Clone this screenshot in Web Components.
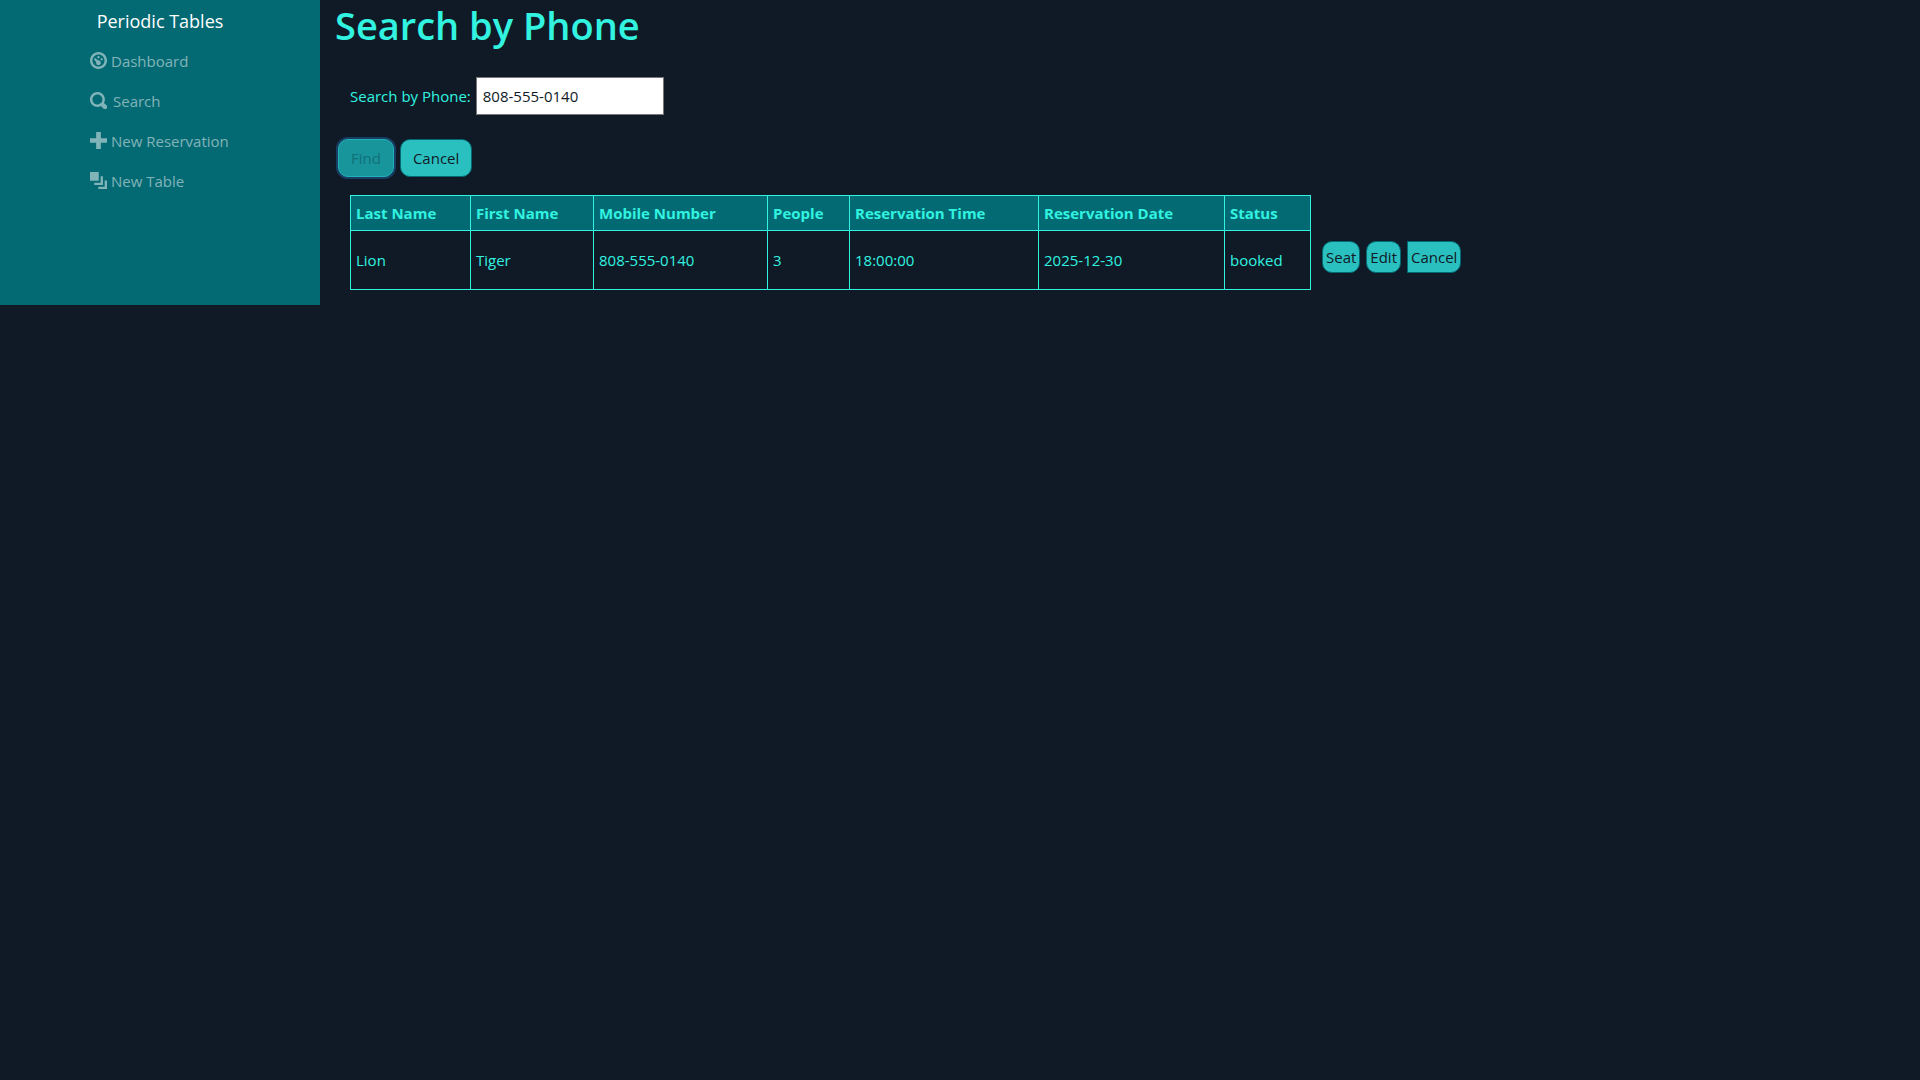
<!DOCTYPE html>
<html lang="en">
<head>
<meta charset="utf-8">
<title>Periodic Tables</title>
<style>
  :root {
    --teal: #036973;
    --bright: #31f3e0;
    --button: #2bc0c0;
    --ink: #101a26;
  }
  body {
    margin: 0;
    background: var(--ink);
    color: var(--bright);
    font: 15px/24px "Segoe UI", "Open Sans", "Noto Sans", sans-serif;
  }
</style>
</head>
<body>
<app-shell>
  <side-bar slot="side" brand="Periodic Tables">
    <nav-item icon="dashboard">Dashboard</nav-item>
    <nav-item icon="search" spaced>Search</nav-item>
    <nav-item icon="plus">New Reservation</nav-item>
    <nav-item icon="layers">New Table</nav-item>
  </side-bar>
  <phone-search></phone-search>
  <reservation-list></reservation-list>
</app-shell>
<script>
const define = (name, html, setup) => {
  const template = document.createElement('template');
  template.innerHTML = `<style>*{box-sizing:border-box}</style>${html}`;
  customElements.define(name, class extends HTMLElement {
    constructor() {
      super();
      this.attachShadow({ mode: 'open' }).append(template.content.cloneNode(true));
    }
    connectedCallback() { if (setup) setup(this, this.shadowRoot); }
  });
};

const icons = {
  dashboard: 'M4 0c-2.2 0-4 1.8-4 4s1.8 4 4 4 4-1.8 4-4-1.8-4-4-4zm0 1.15c1.57 0 2.85 1.28 2.85 2.85s-1.28 2.85-2.85 2.85-2.85-1.28-2.85-2.85 1.28-2.85 2.85-2.85zm0 .75c-.3 0-.55.25-.55.55s.25.55.55.55.55-.25.55-.55-.25-.55-.55-.55zm-1.66 1a.55.55 0 0 0-.25.92l.85.93c-.02.08-.06.16-.06.25 0 .6.5 1.1 1.1 1.1s1.1-.5 1.1-1.1-.5-1.1-1.1-1.1c-.09 0-.17.04-.25.06l-.91-.91a.5.5 0 0 0-.48-.15zm3.16 0c-.3 0-.55.25-.55.55s.25.55.55.55.55-.25.55-.55-.25-.55-.55-.55z',
  search: 'M3.5 0c-1.93 0-3.5 1.57-3.5 3.5s1.57 3.5 3.5 3.5c.59 0 1.17-.14 1.66-.41a1 1 0 0 0 .13.13l1 1a1.02 1.02 0 1 0 1.44-1.44l-1-1a1 1 0 0 0-.16-.13c.27-.49.44-1.06.44-1.66 0-1.93-1.55-3.5-3.5-3.5zm0 1.15c1.3 0 2.35 1.05 2.35 2.35 0 .6-.22 1.16-.6 1.57l-.16.16c-.41.4-.98.62-1.59.62-1.3 0-2.35-1.05-2.35-2.35s1.05-2.35 2.35-2.35z',
  plus: 'M2.9 0v2.9h-2.9v2.2h2.9v2.9h2.2v-2.9h2.9v-2.2h-2.9v-2.9z',
  layers: 'M0 0v4.1h4.1v-4.1zm5 2v3h-3v1.1h4.1v-4.1zm1.9 2v2.9h-3v1.1h4.1v-4z'
};

define('app-shell', `
  <style>
    :host { display: flex; align-items: stretch; }
    aside { flex: 0 0 320px; display: flex; background: var(--teal); }
    main { flex: 1; min-width: 0; padding: 0 15px 15px; }
  </style>
  <aside><slot name="side"></slot></aside>
  <main><slot></slot></main>`);

define('side-bar', `
  <style>
    :host { display: flex; flex: 1; flex-direction: column; align-items: center; }
    a { color: #fff; font-size: 18px; line-height: 24px; padding: 9px 0 8px; text-decoration: none; }
    nav { width: 140px; }
  </style>
  <a href="#"></a>
  <nav><slot></slot></nav>`,
  (host, root) => { root.querySelector('a').textContent = host.getAttribute('brand'); });

define('nav-item', `
  <style>
    :host { display: block; }
    a { display: flex; align-items: center; gap: 4px; height: 40px; color: rgba(255,255,255,.5); text-decoration: none; white-space: nowrap; }
    :host([spaced]) a { gap: 6px; }
    svg { flex: none; width: 17px; height: 17px; fill: currentColor; margin-bottom: 2px; }
  </style>
  <a href="#"><svg viewBox="0 0 8 8" aria-hidden="true"><path/></svg><slot></slot></a>`,
  (host, root) => { root.querySelector('path').setAttribute('d', icons[host.getAttribute('icon')]); });

define('teal-button', `
  <style>
    :host { display: inline-flex; --radius: 10px; }
    button {
      font: inherit; color: #101a26; background: var(--button);
      border: 1px solid var(--teal); border-radius: var(--radius); padding: 6px 12px;
    }
    :host([small]) button { padding: 3px; }
    :host([square]) button { border-radius: 0 var(--radius) var(--radius) 0; }
    :host([focused]) button { color: #127078; background: #18959b; border-color: #20b2b5; box-shadow: 0 0 0 2px #173f66; }
  </style>
  <button type="button"><slot></slot></button>`);

define('phone-search', `
  <style>
    :host { display: block; }
    h1 { margin: 0; font-size: 38px; line-height: 50px; font-weight: 600; }
    .field { display: flex; align-items: center; gap: 5px; padding: 27px 15px 24px; }
    input { width: 188px; height: 38px; font: inherit; color: #101a26; background: #fff; border: 1px solid #767676; border-radius: 0; padding: 0 6px; }
    .actions { display: flex; gap: 6px; padding: 0 3px; }
  </style>
  <h1>Search by Phone</h1>
  <form>
    <div class="field">
      <label for="phone">Search by Phone:</label>
      <input id="phone" type="text" value="808-555-0140">
    </div>
    <div class="actions">
      <teal-button focused>Find</teal-button>
      <teal-button>Cancel</teal-button>
    </div>
  </form>`);

define('reservation-list', `
  <style>
    :host { display: flex; align-items: flex-start; gap: 11px; padding: 18px 15px 0; }
    table { border-collapse: collapse; table-layout: fixed; width: 961px; }
    th, td { border: 1px solid var(--bright); padding: 5px; text-align: left; white-space: nowrap; }
    th { background: var(--teal); font-weight: 700; }
    td { height: 59px; }
    .actions { display: flex; gap: 6px; padding-top: 46px; }
  </style>
  <table>
    <colgroup><col style="width:120px"><col style="width:123px"><col style="width:174px"><col style="width:82px"><col style="width:189px"><col style="width:186px"><col></colgroup>
    <thead><tr><th>Last Name</th><th>First Name</th><th>Mobile Number</th><th>People</th><th>Reservation Time</th><th>Reservation Date</th><th>Status</th></tr></thead>
    <tbody><tr><td>Lion</td><td>Tiger</td><td>808-555-0140</td><td>3</td><td>18:00:00</td><td>2025-12-30</td><td>booked</td></tr></tbody>
  </table>
  <div class="actions">
    <teal-button small>Seat</teal-button>
    <teal-button small>Edit</teal-button>
    <teal-button small square>Cancel</teal-button>
  </div>`);
</script>
</body>
</html>
